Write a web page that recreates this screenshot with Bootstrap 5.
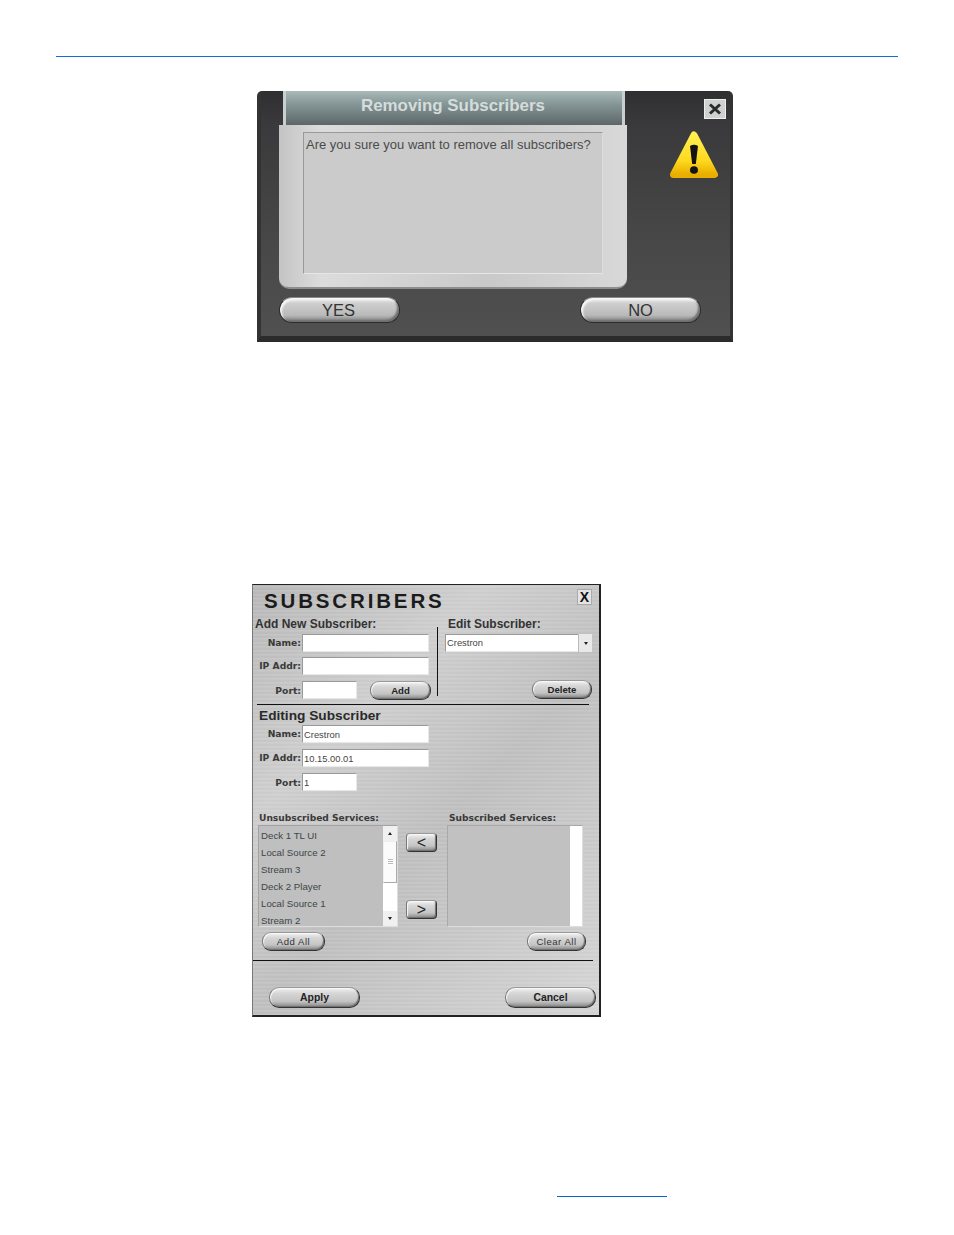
<!DOCTYPE html>
<html lang="en">
<head>
<meta charset="utf-8">
<title>Subscribers</title>
<link href="https://cdn.jsdelivr.net/npm/bootstrap@5.3.0/dist/css/bootstrap.min.css" rel="stylesheet">
<style>
html,body{background:#fff;margin:0;}
body{font-family:"Liberation Sans",Arial,sans-serif;height:1235px;overflow:hidden;}
.top-rule{height:1px;background:#0a6fd6;margin:56px 56px 0;}
.foot-rule{height:1px;width:110px;background:#0a62cf;margin:179px 0 0 557px;}

/* warning dialog */
.warn-win{width:476px;height:251px;margin:34px 0 0 257px;background:linear-gradient(#2f2f31 0,#3a3a3c 14%,#474747 60%,#505050 100%);border-radius:5px 5px 0 0;border-bottom:6px solid #2b2b2b;border-left:4px solid #333;border-right:3px solid #333;}
.warn-top{height:34px;}
.warn-title{width:342px;height:34px;margin-left:22px;background:linear-gradient(#a9bab6 0,#87999a 35%,#5d6668 100%);border-left:3px solid #c9cfcf;border-right:3px solid #c9cfcf;color:#d5dcda;font-weight:700;font-size:16.9px;line-height:29px;text-align:center;padding-right:2px;white-space:nowrap;}
.warn-x{width:22px;height:20px;margin:8px 4px 0 auto;background:#cfd0d0;border:1px solid #eee;}
.warn-main{height:164px;}
.warn-panel{width:348px;height:164px;margin-left:18px;background:linear-gradient(90deg,#c4c4c4,#dcdcdc 12%,#c9c9c9 60%,#d8d8d8);border-radius:0 0 10px 10px;border-bottom:2px solid #8d8d8d;padding:7px 24px 0;}
.warn-msg{width:300px;height:142px;background:#cbcbcb;border:1px solid #999;border-right-color:#ddd;border-bottom-color:#e6e6e6;color:#4b4b4b;font-size:13px;line-height:16px;padding:4px 2px;white-space:nowrap;}
.warn-icon{margin:6px 0 0 43px;}
.warn-btns{padding:8px 29px 0 18px;}
.pill-lg{width:121px;height:26px;padding:0;border-radius:13px;border:1px solid #2c2c2c;border-top-color:#8a8a8a;background:linear-gradient(#f0f0f0 0,#cfcfcf 22%,#b9b9b9 72%,#7c7c7c 100%);box-shadow:inset 2px 2px 2px #f6f6f6,inset -2px -2px 2px #6f6f6f;color:#333;font-size:16.500px;line-height:24px;}
.pill-yes{padding-right:2px;}

/* subscribers dialog */
.sub-win{width:349px;height:433px;margin:242px 0 0 252px;background:linear-gradient(135deg,#b9b9b9 0,#cfcfcf 30%,#c0c0c0 55%,#d6d6d6 100%);background-color:#c4c4c4;border:1px solid #222;border-left-color:#777;border-right-width:2px;border-bottom-width:2px;position:relative;overflow:hidden;}
.sub-brush{background-image:repeating-linear-gradient(0deg,rgba(255,255,255,.09) 0 1px,rgba(0,0,0,.012) 1px 3px,rgba(255,255,255,.03) 3px 4px);height:100%;}
.sub-head{height:31px;padding:4px 7px 0 11px;}
.sub-title{font-size:20.5px;font-weight:700;letter-spacing:2.85px;line-height:24px;color:#1b1b1b;white-space:nowrap;}
.sub-x{width:15px;height:16px;background:#e4e4e4;border:1px solid #aaa;font-size:14px;font-weight:700;line-height:14px;text-align:center;color:#111;}
.col-new{width:184px;}
.col-edit{width:154px;padding-left:7px;}
.vline{width:1px;height:69px;margin-top:11px;background:#111;}
.sec-title{font-size:12px;line-height:15px;height:18px;padding-top:1px;font-weight:700;color:#333;padding-left:2px;white-space:nowrap;}
.sec-title2{padding-left:3px;}
.row-f{height:18px;margin-bottom:6px;}
.row-f.tight{margin-bottom:5px;}
.lbl{width:48px;margin-right:1px;text-align:right;font-family:"DejaVu Sans",sans-serif;font-size:9.2px;font-weight:700;color:#3a3a3a;line-height:17px;white-space:nowrap;}
.lbl-port{line-height:19px;}
.ip-wide.form-control,.ip-short.form-control,.ip-sel.form-select{height:18px;min-height:18px;padding:0 1px;border:1px solid;border-color:#9a9a9a #e8e8e8 #e8e8e8 #9a9a9a;border-radius:0;background-color:#fff;font-size:9.4px;line-height:16px;color:#444;box-shadow:none;}
.ip-wide.form-control{width:127px;}
.ip-short.form-control{width:55px;}
.ip-sel.form-select{width:147px;background-image:none;}
.sel-wrap{position:relative;width:147px;}
.sel-arr{position:absolute;right:0;top:0;width:14px;height:18px;background:#e9e9e9;border-left:1px solid #bbb;display:flex;align-items:center;justify-content:center;}
.tri-d{width:0;height:0;border-left:2px solid transparent;border-right:2px solid transparent;border-top:3px solid #222;}
.tri-u{width:0;height:0;border-left:2px solid transparent;border-right:2px solid transparent;border-bottom:3px solid #222;}
.pill{padding:0;border-radius:9px/9px;border:1px solid #333;border-top-color:#999;border-left-color:#777;background:linear-gradient(#f2f2f2 0,#d6d6d6 28%,#c4c4c4 70%,#858585 100%);box-shadow:inset 1px 1px 1px #f8f8f8,inset -1px -1px 1px #6f6f6f;color:#222;font-size:9.6px;font-weight:700;line-height:14px;height:19px;}
.pill-add{width:61px;margin-left:13px;}
.pill-del{width:60px;}
.pill-thin{font-weight:400;color:#333;height:19px;letter-spacing:.5px;}
.pill-a{width:63px;}
.pill-c{width:59px;}
.pill-b{width:91px;height:21px;font-size:10.4px;line-height:18px;border-radius:10px;}
.pill-ar{width:31px;height:19px;font-size:16px;line-height:14px;font-weight:400;border-radius:4px;}
.del-row{padding-top:28px;}
.sep1{height:1px;background:#111;width:332px;margin:5px 0 0 4px;}
.edit-title{font-size:13.7px;line-height:18px;padding:2px 0 0 6px;font-weight:700;color:#2a2a2a;box-sizing:content-box;height:18px;white-space:nowrap;}
.svc-labels{margin-top:21px;padding-left:6px;height:13px;}
.svc-lbl{font-family:"DejaVu Sans",sans-serif;font-size:9.1px;font-weight:700;color:#3a3a3a;line-height:13px;white-space:nowrap;}
.svc-l{width:190px;}
.svc-area{height:102px;padding-left:5px;}
.lst-l{width:140px;height:102px;background:#bfbfbf;border:1px solid #a2a2a2;border-right-color:#ddd;border-bottom-color:#ddd;}
.lst-r{width:136px;height:102px;background:#c1c1c1;border:1px solid #a9a9a9;border-right-color:#ddd;border-bottom-color:#ddd;}
.lst-items{flex:1;padding:1px 1px;overflow:hidden;}
.lst-items .list-group-item{background:transparent;border:0;padding:0 0 0 1px;height:17px;font-size:9.7px;line-height:17px;color:#3c4646;white-space:nowrap;}
.sbar{width:14px;background:#fff;}
.sbar-btn{height:15px;background:#f0f0f0;display:flex;align-items:center;justify-content:center;}
.sbar-track{flex:1;}
.sbar-thumb{height:42px;border:1px solid #eee;border-right-color:#aaa;border-bottom-color:#aaa;background:#fbfbfb;display:flex;align-items:center;justify-content:center;}
.grip{width:5px;height:6px;background:repeating-linear-gradient(#bbb 0 1px,#fff 1px 2px);}
.sbar-plain{width:12px;background:#fff;margin-left:auto;height:100%;}
.arrow-col{width:49px;padding:8px 0 8px 8px;}
.allrow{margin-top:5px;padding:0 13px 0 9px;}
.sep2{height:1px;background:#111;width:340px;margin-top:9px;}
.actrow{margin-top:26px;padding:0 3px 0 16px;}
</style>
</head>
<body>
<div class="top-rule"></div>

<section class="warn-win d-flex flex-column">
  <div class="warn-top d-flex">
    <div class="warn-title">Removing Subscribers</div>
    <div class="warn-x d-flex align-items-center justify-content-center">
      <svg width="14" height="12" viewBox="0 0 14 12"><path d="M2 1.5 12 10.5M12 1.5 2 10.5" stroke="#2a2a2a" stroke-width="3" fill="none"/></svg>
    </div>
  </div>
  <div class="warn-main d-flex">
    <div class="warn-panel"><div class="warn-msg">Are you sure you want to remove all subscribers?</div></div>
    <svg class="warn-icon" width="48" height="48" viewBox="0 0 48 48">
      <defs><linearGradient id="yg" x1="0" y1="0" x2="0" y2="1"><stop offset="0" stop-color="#fff04f"/><stop offset=".65" stop-color="#ffd91e"/><stop offset="1" stop-color="#e8ae00"/></linearGradient></defs>
      <path d="M24 4 44.500 43.500H3.500Z" fill="url(#yg)" stroke="url(#yg)" stroke-width="7" stroke-linejoin="round"/>
      <path d="M20 15Q24 12.500 28 15L25.800 33H22.200Z" fill="#141414"/>
      <ellipse cx="24" cy="39" rx="4" ry="3.800" fill="#141414"/>
    </svg>
  </div>
  <div class="warn-btns d-flex justify-content-between">
    <button type="button" class="btn pill-lg pill-yes">YES</button>
    <button type="button" class="btn pill-lg">NO</button>
  </div>
</section>

<section class="sub-win">
 <div class="sub-brush">
  <div class="sub-head d-flex justify-content-between align-items-start">
    <div class="sub-title">SUBSCRIBERS</div>
    <div class="sub-x">X</div>
  </div>
  <div class="d-flex">
    <div class="col-new">
      <div class="sec-title">Add New Subscriber:</div>
      <div class="row-f tight d-flex"><div class="lbl">Name:</div><input class="form-control ip-wide" type="text" aria-label="Name"></div>
      <div class="row-f d-flex"><div class="lbl">IP Addr:</div><input class="form-control ip-wide" type="text" aria-label="IP Addr"></div>
      <div class="row-f d-flex mb-0"><div class="lbl lbl-port">Port:</div><input class="form-control ip-short" type="text" aria-label="Port"><button type="button" class="btn pill pill-add">Add</button></div>
    </div>
    <div class="vline"></div>
    <div class="col-edit">
      <div class="sec-title sec-title2">Edit Subscriber:</div>
      <div class="sel-wrap">
        <select class="form-select ip-sel" aria-label="Edit Subscriber"><option>Crestron</option></select>
        <div class="sel-arr"><div class="tri-d"></div></div>
      </div>
      <div class="del-row d-flex justify-content-end"><button type="button" class="btn pill pill-del">Delete</button></div>
    </div>
  </div>
  <div class="sep1"></div>
  <div class="edit-block">
    <div class="edit-title">Editing Subscriber</div>
    <div class="row-f d-flex"><div class="lbl">Name:</div><input class="form-control ip-wide" type="text" value="Crestron" aria-label="Name"></div>
    <div class="row-f d-flex"><div class="lbl">IP Addr:</div><input class="form-control ip-wide" type="text" value="10.15.00.01" aria-label="IP Addr"></div>
    <div class="row-f d-flex mb-0"><div class="lbl lbl-port">Port:</div><input class="form-control ip-short" type="text" value="1" aria-label="Port"></div>
  </div>
  <div class="svc-labels d-flex">
    <div class="svc-lbl svc-l">Unsubscribed Services:</div>
    <div class="svc-lbl">Subscribed Services:</div>
  </div>
  <div class="svc-area d-flex">
    <div class="lst-l d-flex">
      <ul class="list-group lst-items rounded-0">
        <li class="list-group-item">Deck 1 TL UI</li>
        <li class="list-group-item">Local Source 2</li>
        <li class="list-group-item">Stream 3</li>
        <li class="list-group-item">Deck 2 Player</li>
        <li class="list-group-item">Local Source 1</li>
        <li class="list-group-item">Stream 2</li>
      </ul>
      <div class="sbar d-flex flex-column">
        <div class="sbar-btn"><div class="tri-u"></div></div>
        <div class="sbar-thumb"><div class="grip"></div></div>
        <div class="sbar-track"></div>
        <div class="sbar-btn"><div class="tri-d"></div></div>
      </div>
    </div>
    <div class="arrow-col d-flex flex-column justify-content-between">
      <button type="button" class="btn pill pill-ar">&lt;</button>
      <button type="button" class="btn pill pill-ar">&gt;</button>
    </div>
    <div class="lst-r"><div class="sbar-plain"></div></div>
  </div>
  <div class="allrow d-flex justify-content-between">
    <button type="button" class="btn pill pill-thin pill-a">Add All</button>
    <button type="button" class="btn pill pill-thin pill-c">Clear All</button>
  </div>
  <div class="sep2"></div>
  <div class="actrow d-flex justify-content-between">
    <button type="button" class="btn pill pill-b">Apply</button>
    <button type="button" class="btn pill pill-b">Cancel</button>
  </div>
 </div>
</section>

<div class="foot-rule"></div>
<script src="https://cdn.jsdelivr.net/npm/bootstrap@5.3.0/dist/js/bootstrap.bundle.min.js"></script>
</body>
</html>
